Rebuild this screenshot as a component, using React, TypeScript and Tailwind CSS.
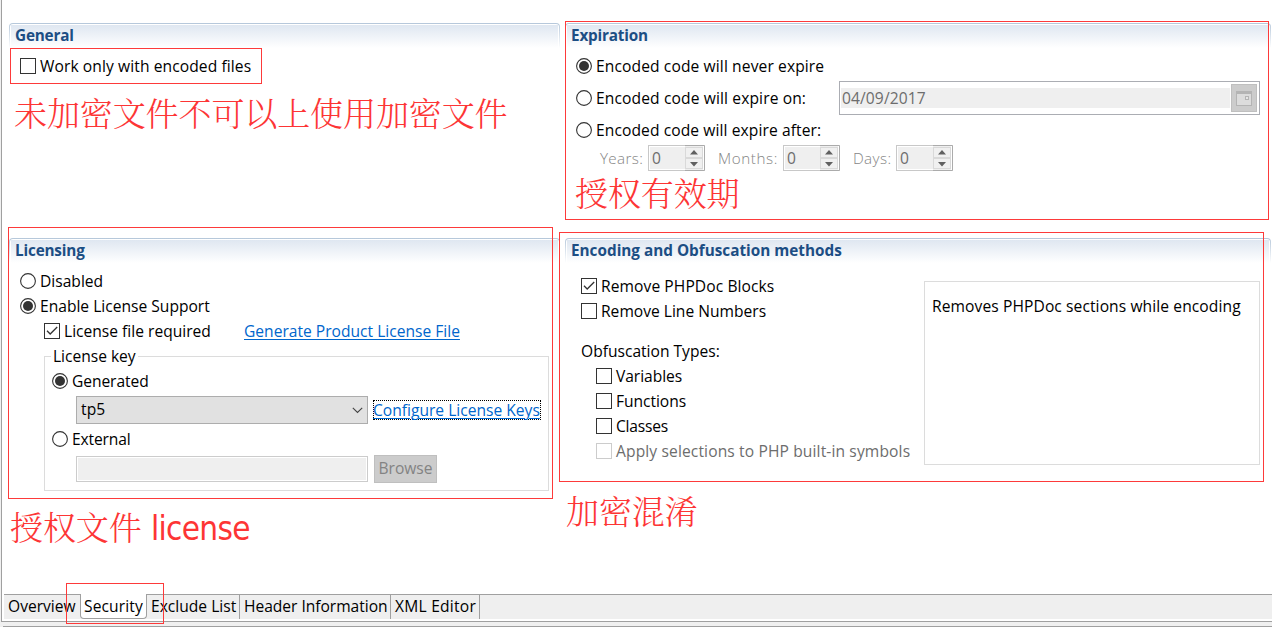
import type { ReactNode } from "react";

function Section({ title, tracking = "", children }: { title: string; tracking?: string; children: ReactNode }) {
  return (
    <section className="flex flex-col">
      <div className="h-[25px] shrink-0 rounded-t-[4px] bg-linear-to-b from-[#b5c7da] to-white px-px pt-px">
        <div className="h-full rounded-t-[3px] bg-white px-px pt-px">
          <h2 className="h-full bg-linear-to-b from-[#dfe7f1] to-white pl-1 font-bold text-[15.3px] leading-[21px] text-[#1c4e84]">
            <span className={tracking}>{title}</span>
          </h2>
        </div>
      </div>
      {children}
    </section>
  );
}

function Radio({ checked = false }: { checked?: boolean }) {
  return (
    <svg className="size-4 shrink-0" viewBox="0 0 16 16">
      <circle cx="8" cy="8" r="7.4" fill="#fff" stroke="#333" strokeWidth="1.1" />
      {checked && <circle cx="8" cy="8" r="5" fill="#333" />}
    </svg>
  );
}

function Check({ checked = false, disabled = false }: { checked?: boolean; disabled?: boolean }) {
  return (
    <svg className="size-4 shrink-0" viewBox="0 0 16 16">
      <rect x="0.5" y="0.5" width="15" height="15" fill="#fff" stroke={disabled ? "#ccc" : "#333"} />
      {checked && <path d="M3 7.8 L6.2 11 L13.2 4" fill="none" stroke="#333" strokeWidth="1.3" />}
    </svg>
  );
}

function Option({ mark, label, className = "" }: { mark: ReactNode; label: string; className?: string }) {
  return (
    <label className={`flex h-[25px] items-center gap-1 whitespace-nowrap ${className}`}>
      {mark}
      <span className="leading-4">{label}</span>
    </label>
  );
}

function Spinner() {
  return (
    <div className="flex h-[26px] w-[57px] border border-[#c8c8c8] border-r-[#ababab] bg-white">
      <div className="my-px ml-px w-[35px] bg-[#efefef] pl-[2px] text-[15.6px] leading-[23px] font-normal text-[#6d6d6d]">0</div>
      <svg className="-my-px h-[26px] w-[19px]" viewBox="0 0 19 26">
        <path d="M0 .5H19M0 25.5H19" stroke="#ababab" />
        <rect x="0" y="1" width="18" height="24" fill="#efefef" />
        <rect x="0.5" y="2.5" width="17" height="10" fill="#f0f0f0" stroke="#d9d9d9" />
        <rect x="0.5" y="13.5" width="17" height="10" fill="#f0f0f0" stroke="#d9d9d9" />
        <path d="M5 9.5 L9 5 L13 9.5Z M5 17 L9 21.5 L13 17Z" fill="#606060" />
      </svg>
    </div>
  );
}

const cjk = "pointer-events-none absolute whitespace-nowrap font-['Noto_Serif_CJK_SC','Noto_Sans_CJK_SC',serif] font-light text-[33px] leading-[40px] tracking-[-0.1px] text-[#fd3535]";
const box = "pointer-events-none absolute border border-[#fd3a3a]";

export default function App() {
  return (
    <div className="relative flex h-[627px] w-[1272px] flex-col overflow-hidden bg-[#f0f0f0] font-['Open_Sans','Noto_Sans',sans-serif] text-[15.6px] text-black">
      <div className="ml-px flex h-[622px] shrink-0 flex-col border-b border-l border-[#a0a0a0] bg-white">
        <main className="grid h-[594px] grid-cols-[551px_706px] grid-rows-[215px_356px] gap-x-[5px] pt-[23px] pl-[7px]">
          <Section title="General" tracking="tracking-[-0.19px]">
            <Option mark={<Check />} label="Work only with encoded files" className="mt-[5px] pl-[11px] tracking-[0.09px]" />
          </Section>

          <Section title="Expiration" tracking="tracking-[-0.19px]">
            <div className="flex flex-col pl-[11px]">
              <Option mark={<Radio checked />} label="Encoded code will never expire" className="mt-[5px] tracking-[0.11px]" />
              <div className="mt-[3px] flex h-[34px] items-center">
                <Option mark={<Radio />} label="Encoded code will expire on:" className="w-[263px] tracking-[0.12px]" />
                <div className="flex h-[34px] w-[421px] items-center border border-[#abadb3] bg-white pl-px">
                  <div className="h-5 w-[389px] bg-[#efefef] pl-px leading-[21px] tracking-[0.1px] text-[#6d6d6d]">04/09/2017</div>
                  <svg className="ml-px h-7 w-[26px]" viewBox="0 0 26 28">
                    <rect x="0.5" y="0.5" width="25" height="27" fill="#ccc" stroke="#bfbfbf" />
                    <rect x="5.5" y="7.5" width="15" height="14" fill="#dcdcdc" stroke="#b4b4b4" />
                    <path d="M5 8.5H21" stroke="#b4b4b4" strokeWidth="3" />
                    <rect x="14.5" y="12.5" width="3" height="3" fill="#e6e6e6" stroke="#b4b4b4" />
                  </svg>
                </div>
              </div>
              <Option mark={<Radio />} label="Encoded code will expire after:" className="mt-[2px] tracking-[0.09px]" />
              <div className="mt-[3px] flex h-[26px] items-center pl-6 text-[15.2px] font-light text-[#858585]">
                <span className="w-12 tracking-[0.35px]">Years:</span><Spinner />
                <span className="w-[78px] pl-[13px] tracking-[0.6px]">Months:</span><Spinner />
                <span className="w-14 pl-[13px] tracking-[0.4px]">Days:</span><Spinner />
              </div>
            </div>
          </Section>

          <Section title="Licensing" tracking="tracking-[-0.18px]">
            <div className="flex flex-col pt-[5px] pl-[11px]">
              <Option mark={<Radio />} label="Disabled" />
              <Option mark={<Radio checked />} label="Enable License Support" />
              <div className="flex items-center">
                <Option mark={<Check checked />} label="License file required" className="w-[224px] pl-6" />
                <a className="leading-4 text-[#0066cc] underline decoration-1 underline-offset-2">Generate Product License File</a>
              </div>
              <fieldset className="ml-6 flex h-[148px] w-[505px] flex-col border border-[#dcdcdc] pl-[7px]">
                <legend className="-ml-px px-[2px] leading-[26px] tracking-[-0.02px]">License key</legend>
                <Option mark={<Radio checked />} label="Generated" className="-mt-px tracking-[-0.08px]" />
                <div className="mt-[3px] ml-6 flex h-7 items-center gap-[5px]">
                  <div className="flex h-7 w-[292px] items-center justify-between border border-[#adadad] bg-[#e1e1e1] pr-1 pl-1">
                    <span className="tracking-[0.1px]">tp5</span>
                    <svg className="h-[7px] w-[11px]" viewBox="0 0 11 7"><path d="M.8 .8 L5.5 5.5 L10.2 .8" fill="none" stroke="#444" strokeWidth="1.1" /></svg>
                  </div>
                  <a className="h-5 w-[168px] whitespace-nowrap border border-dotted border-black leading-[18px] text-[#0066cc] underline decoration-1 underline-offset-2"><span className="-ml-px">Configure License Keys</span></a>
                </div>
                <Option mark={<Radio />} label="External" className="mt-[2px] tracking-[-0.15px]" />
                <div className="mt-1 ml-6 flex h-7 items-center gap-[6px]">
                  <div className="h-[26px] w-[292px] border border-[#ccc] bg-white p-px"><div className="h-full bg-[#efefef]" /></div>
                  <button className="h-7 w-[63px] border border-[#bfbfbf] bg-[#ccc] text-[#838383]">Browse</button>
                </div>
              </fieldset>
            </div>
          </Section>

          <Section title="Encoding and Obfuscation methods">
            <div className="flex pl-4">
              <div className="w-[343px] pt-[10px]">
                <Option mark={<Check checked />} label="Remove PHPDoc Blocks" className="tracking-[0.08px]" />
                <Option mark={<Check />} label="Remove Line Numbers" />
                <p className="mt-4 h-6 leading-[25px]">Obfuscation Types:</p>
                <div className="pl-[15px]">
                  <Option mark={<Check />} label="Variables" className="tracking-[-0.05px]" />
                  <Option mark={<Check />} label="Functions" className="tracking-[-0.05px]" />
                  <Option mark={<Check />} label="Classes" className="tracking-[-0.2px]" />
                  <Option mark={<Check disabled />} label="Apply selections to PHP built-in symbols" className="tracking-[0.12px] text-[#6d6d6d]" />
                </div>
              </div>
              <div className="mt-[18px] h-[184px] w-[336px] border border-[#dcdcdc] pt-3 pl-[7px] leading-[25px] tracking-[0.09px]">
                Removes PHPDoc sections while encoding
              </div>
            </div>
          </Section>
        </main>

        <nav className="ml-[2px] flex h-[25px] shrink-0 bg-[#efefef] leading-[22px] whitespace-nowrap">
          <span className="w-[76px] border-t border-[#a0a0a0] pl-1">Overview</span>
          <span className="w-[67px] rounded-b-[4px] border border-t-0 border-[#a0a0a0] bg-white pt-px pl-[3px] tracking-[0.1px]">Security</span>
          <span className="w-[93px] border-t border-r border-[#a0a0a0] pl-1">Exclude List</span>
          <span className="w-[151px] border-t border-r border-[#a0a0a0] pl-1 tracking-[-0.03px]">Header Information</span>
          <span className="w-[89px] border-t border-r border-[#a0a0a0] pl-1 tracking-[0.24px]">XML Editor</span>
          <span className="flex-1 border-t border-[#a0a0a0]" />
        </nav>
      </div>
      <div className="mt-1 ml-[3px] h-px shrink-0 bg-[#a0a0a0]" />

      <div className={`${box} top-[48px] left-[10px] h-[36px] w-[252px]`} />
      <div className={`${box} top-[21px] left-[565px] h-[199px] w-[704px]`} />
      <div className={`${box} top-[227px] left-[8px] h-[272px] w-[545px]`} />
      <div className={`${box} top-[232px] left-[559px] h-[250px] w-[705px]`} />
      <div className={`${box} top-[583px] left-[66px] h-[41px] w-[98px]`} />

      <p className={`${cjk} top-[92px] left-[14px]`}>未加密文件不可以上使用加密文件</p>
      <p className={`${cjk} top-[172px] left-[575px]`}>授权有效期</p>
      <p className={`${cjk} top-[506px] left-[10px]`}>
        授权文件 <span className="ml-px font-['DejaVu_Sans_Condensed','DejaVu_Sans'] font-normal tracking-[-0.7px]">license</span>
      </p>
      <p className={`${cjk} top-[490px] left-[566px]`}>加密混淆</p>
    </div>
  );
}
